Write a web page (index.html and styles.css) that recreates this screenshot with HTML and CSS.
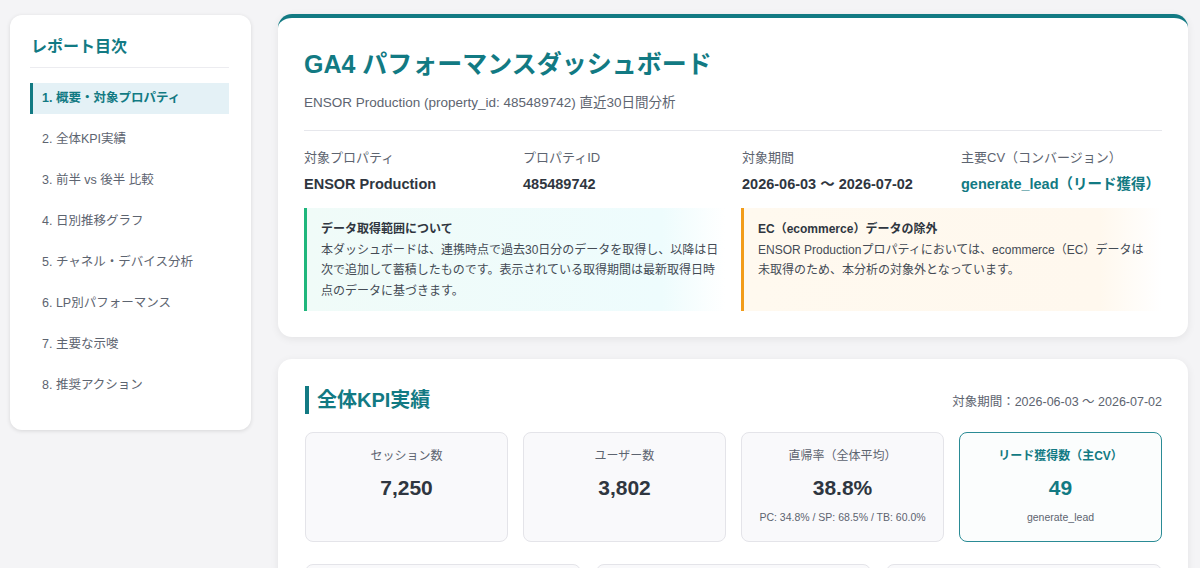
FILE: index.html
```html
<!DOCTYPE html>
<html lang="ja">
<head>
    <meta charset="UTF-8">
    <meta name="viewport" content="width=device-width, initial-scale=1.0">
    <title>GA4 パフォーマンスダッシュボード</title>
    <link rel="stylesheet" href="styles.css">
</head>
<body>
    <div class="layout">
        <nav class="toc">
            <h2 class="toc-title">レポート目次</h2>
            <ul class="toc-list">
                <li class="active">1. 概要・対象プロパティ</li>
                <li>2. 全体KPI実績</li>
                <li>3. 前半 vs 後半 比較</li>
                <li>4. 日別推移グラフ</li>
                <li>5. チャネル・デバイス分析</li>
                <li>6. LP別パフォーマンス</li>
                <li>7. 主要な示唆</li>
                <li>8. 推奨アクション</li>
            </ul>
        </nav>

        <main class="main">
            <section class="card header-card">
                <h1>GA4 パフォーマンスダッシュボード</h1>
                <p class="subtitle">ENSOR Production (property_id: 485489742) 直近30日間分析</p>
                <div class="info-grid">
                    <div>
                        <div class="info-label">対象プロパティ</div>
                        <div class="info-value">ENSOR Production</div>
                    </div>
                    <div>
                        <div class="info-label">プロパティID</div>
                        <div class="info-value">485489742</div>
                    </div>
                    <div>
                        <div class="info-label">対象期間</div>
                        <div class="info-value">2026-06-03 〜 2026-07-02</div>
                    </div>
                    <div>
                        <div class="info-label">主要CV（コンバージョン）</div>
                        <div class="info-value accent">generate_lead（リード獲得）</div>
                    </div>
                </div>
                <div class="notes">
                    <div class="note note-info">
                        <div class="note-title">データ取得範囲について</div>
                        <p>本ダッシュボードは、連携時点で過去30日分のデータを取得し、以降は日次で追加して蓄積したものです。表示されている取得期間は最新取得日時点のデータに基づきます。</p>
                    </div>
                    <div class="note note-warn">
                        <div class="note-title">EC（ecommerce）データの除外</div>
                        <p>ENSOR Productionプロパティにおいては、ecommerce（EC）データは未取得のため、本分析の対象外となっています。</p>
                    </div>
                </div>
            </section>

            <section class="card">
                <div class="section-head">
                    <h2 class="section-title">全体KPI実績</h2>
                    <span class="section-period">対象期間：2026-06-03 〜 2026-07-02</span>
                </div>
                <div class="kpi-grid">
                    <div class="kpi">
                        <div class="kpi-label">セッション数</div>
                        <div class="kpi-value">7,250</div>
                    </div>
                    <div class="kpi">
                        <div class="kpi-label">ユーザー数</div>
                        <div class="kpi-value">3,802</div>
                    </div>
                    <div class="kpi">
                        <div class="kpi-label">直帰率（全体平均）</div>
                        <div class="kpi-value">38.8%</div>
                        <div class="kpi-sub">PC: 34.8% / SP: 68.5% / TB: 60.0%</div>
                    </div>
                    <div class="kpi kpi-main">
                        <div class="kpi-label">リード獲得数（主CV）</div>
                        <div class="kpi-value">49</div>
                        <div class="kpi-sub">generate_lead</div>
                    </div>
                </div>
                <div class="kpi-row2">
                    <div class="kpi"></div>
                    <div class="kpi"></div>
                    <div class="kpi"></div>
                </div>
            </section>
        </main>
    </div>
</body>
</html>
```

FILE: styles.css
```css
:root {
    --teal: #127a83;
    --text: #2f3640;
    --muted: #5d6470;
    --line: #e6e7ec;
}
* {
    box-sizing: border-box;
}
body {
    margin: 0;
    font-family: "Liberation Sans", "Noto Sans CJK JP", sans-serif;
    background: #f4f4f6;
    color: var(--text);
    overflow: hidden;
}
.layout {
    display: flex;
    align-items: flex-start;
    gap: 27px;
    padding: 14px 12px 0 10px;
}
.toc {
    flex: 0 0 241px;
    margin-top: 1px;
    background: #fff;
    border-radius: 12px;
    box-shadow: 0 1px 4px rgba(0,0,0,0.12);
    padding: 20px 22px 29px 20px;
}
.toc-title {
    margin: 0;
    font-size: 16px;
    line-height: 24px;
    color: var(--teal);
    padding: 0 0 8px 1px;
    border-bottom: 1px solid #ececf0;
}
.toc-list {
    list-style: none;
    margin: 15px 0 0;
    padding: 0;
}
.toc-list li {
    height: 31px;
    line-height: 31px;
    font-size: 12.5px;
    color: var(--muted);
    padding-left: 9px;
    margin-bottom: 10px;
    border-left: 3px solid transparent;
}
.toc-list li:last-child {
    margin-bottom: 0;
}
.toc-list li.active {
    background: #e4f1f6;
    border-left-color: var(--teal);
    color: var(--teal);
    font-weight: 700;
}
.main {
    flex: 1;
    display: flex;
    flex-direction: column;
    gap: 22px;
}
.card {
    background: #fff;
    border-radius: 14px;
    box-shadow: 0 2px 8px rgba(0,0,0,0.07);
    padding: 27px 26px 26px;
}
.header-card {
    border-top: 4px solid var(--teal);
    padding-top: 30px;
}
.header-card h1 {
    margin: 0;
    font-size: 25px;
    line-height: 33px;
    color: var(--teal);
}
.subtitle {
    margin: 12px 0 0;
    font-size: 13.5px;
    line-height: 20px;
    color: var(--muted);
    padding-bottom: 17px;
    border-bottom: 1px solid var(--line);
}
.info-grid {
    display: grid;
    grid-template-columns: repeat(4, 1fr);
    gap: 18px;
    margin-top: 17px;
}
.info-label {
    font-size: 13px;
    line-height: 20px;
    color: var(--muted);
}
.info-value {
    margin-top: 5px;
    font-size: 14.5px;
    line-height: 22px;
    font-weight: 700;
    color: var(--text);
    white-space: nowrap;
}
.info-value.accent {
    color: var(--teal);
}
.notes {
    display: grid;
    grid-template-columns: 1fr 1fr;
    gap: 16px;
    margin-top: 13px;
}
.note {
    min-height: 100px;
    padding: 11px 6px 10px 14px;
    border-left: 3px solid;
    font-size: 12px;
    line-height: 20.5px;
}
.note-info {
    border-left-color: #1fb67c;
    background: linear-gradient(90deg, #f0fbf8, #eefcfd 85%, #fff);
}
.note-warn {
    padding-right: 18px;
    border-left-color: #f29c19;
    background: linear-gradient(90deg, #fff9ef, #fff8ee 85%, #fff);
}
.note-title {
    font-weight: 700;
    color: var(--text);
}
.note p {
    margin: 0;
    color: #444b55;
}
.section-head {
    display: flex;
    justify-content: space-between;
    align-items: center;
}
.section-title {
    margin: 0 0 0 1px;
    font-size: 20px;
    line-height: 28px;
    color: var(--teal);
    border-left: 4px solid var(--teal);
    padding-left: 8px;
}
.section-period {
    font-size: 12.5px;
    color: var(--muted);
}
.kpi-grid {
    display: grid;
    grid-template-columns: repeat(4, 1fr);
    gap: 15px;
    margin: 18px 0 0 1px;
}
.kpi {
    min-height: 109px;
    border: 1px solid #e4e4e9;
    border-radius: 8px;
    background: #f9f9fb;
    text-align: center;
    padding: 14px 8px 16px;
}
.kpi-label {
    font-size: 12px;
    line-height: 18px;
    color: var(--muted);
}
.kpi-value {
    margin-top: 9px;
    font-size: 21px;
    line-height: 28px;
    font-weight: 700;
    color: var(--text);
}
.kpi-sub {
    margin-top: 7px;
    font-size: 10.5px;
    line-height: 16px;
    color: var(--muted);
}
.kpi-main {
    border-color: #2a8b95;
    background: #fbfdfd;
}
.kpi-main .kpi-label {
    color: var(--teal);
    font-weight: 700;
}
.kpi-main .kpi-value {
    color: var(--teal);
}
.kpi-row2 {
    display: grid;
    grid-template-columns: repeat(3, 1fr);
    gap: 15px;
    margin: 22px 0 0 1px;
}
```
